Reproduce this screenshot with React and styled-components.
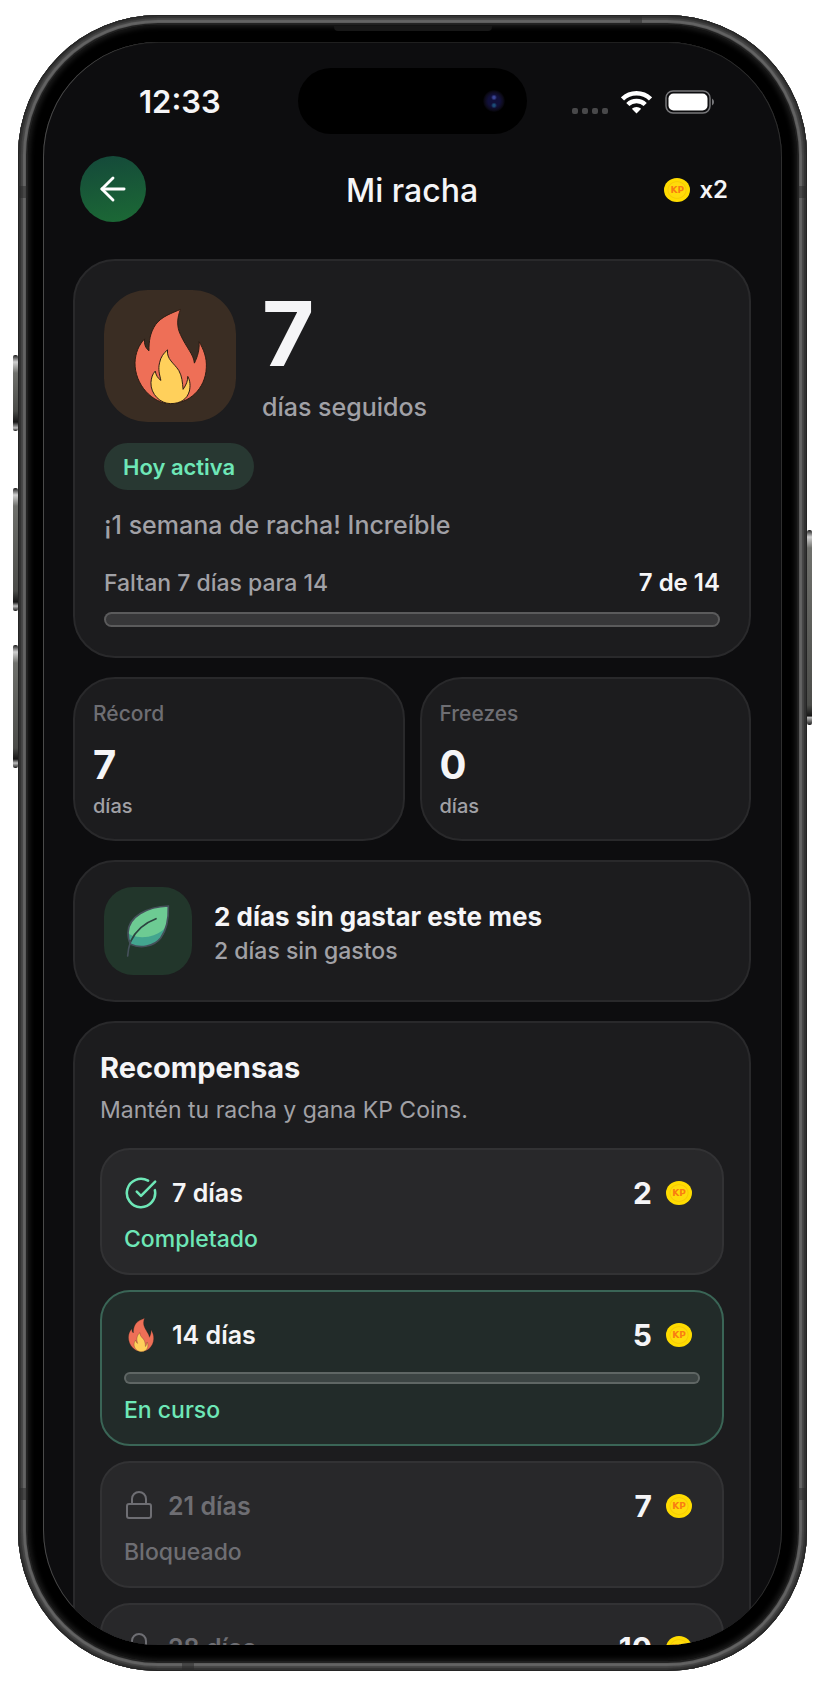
import React from 'react';
import styled, { createGlobalStyle } from 'styled-components';
import { ArrowLeft, CircleCheckBig } from 'lucide-react';

const GlobalStyle = createGlobalStyle`
  * {
    box-sizing: border-box;
  }

  body {
    margin: 0;
    background: #ffffff;
    font-family: Inter, 'Noto Sans', sans-serif;
    -webkit-font-smoothing: antialiased;
  }

  h1, h2, p, ul {
    margin: 0;
    padding: 0;
  }
`;

/* ---------- phone ---------- */

const Page = styled.div`
  height: 100vh;
  min-height: 900px;
  padding: 15px 17px 16px 18px;
`;

const Phone = styled.div`
  position: relative;
  height: 100%;
  padding: 10px;
  border-radius: 140px;
  background: #202020;
  box-shadow:
    inset 0 0 0 1px #242424,
    inset 0 0 1px 3px #323232,
    inset 0 0 1px 5px #454545,
    inset 0 0 1px 8px #646464,
    inset 0 0 0 9px #1c1c1c;
`;

const Bezel = styled.div`
  height: 100%;
  padding: 17px 15px 16px;
  border-radius: 130px;
  background: #000000;
  box-shadow: inset 0 0 5px 2px #1b1b1b;
`;

const Screen = styled.main`
  height: 100%;
  overflow: hidden;
  padding: 26px 31px 0 30px;
  border-radius: 115px;
  background: #0d0d0f;
  box-shadow: inset 1px 0 0 #4a4a4a, inset -1px 0 0 #2e2e2e, inset 0 1px 0 #1f1f1f;
  color: #f5f5f7;
`;

const Earpiece = styled.span`
  position: absolute;
  top: 11px;
  left: 50%;
  width: 158px;
  height: 5px;
  transform: translateX(-50%);
  border-radius: 0 0 4px 4px;
  background: #171717;
`;

const SideButton = styled.span`
  position: absolute;
  top: ${(props) => props.$top};
  ${(props) => props.$side}: -5px;
  width: 5px;
  height: ${(props) => props.$height};
  border-radius: 2px;
  background: linear-gradient(#1c1c1c, #d0d0d0 7px, #6f706c 18px, #4b4c49 calc(100% - 20px), #161616 calc(100% - 9px), #bdbdbd 96%, #1c1c1c);
`;

const Antenna = styled.span`
  position: absolute;
  ${(props) => props.$edge}: 0;
  ${(props) => props.$from}: ${(props) => props.$at};
  width: ${(props) => (props.$flat ? '12px' : '9px')};
  height: ${(props) => (props.$flat ? '9px' : '12px')};
  background: rgba(40, 40, 40, 0.5);
`;

/* ---------- status bar ---------- */

const StatusBar = styled.div`
  display: grid;
  grid-template-columns: 1fr auto 1fr;
  align-items: center;
`;

const Clock = styled.time`
  padding: 2px 0 0 66px;
  font-size: 31px;
  font-weight: 600;
  line-height: 40px;
`;

const Island = styled.div`
  display: flex;
  align-items: center;
  justify-content: flex-end;
  width: 229px;
  height: 66px;
  padding-right: 22px;
  border-radius: 33px;
  background: #000000;
`;

const Camera = styled.span`
  width: 22px;
  height: 22px;
  border-radius: 50%;
  background:
    radial-gradient(circle at 50% 34%, #3a4596 0 1px, transparent 3px),
    radial-gradient(circle at 50% 70%, #1b4d78 0 1px, transparent 3px),
    radial-gradient(circle, #11103a 0 6px, #0d0b1c 9px, #030305 11px);
`;

const Indicators = styled.div`
  display: flex;
  align-items: center;
  justify-content: flex-end;
  gap: 13px;
  padding: 2px 35px 0 0;
`;

const SignalDots = styled.span`
  display: flex;
  gap: 4px;
  padding-top: 17px;

  i {
    width: 6px;
    height: 6px;
    border-radius: 2px;
    background: #48484a;
  }
`;

/* ---------- header ---------- */

const Header = styled.header`
  display: grid;
  grid-template-columns: 1fr auto 1fr;
  align-items: center;
  margin: 22px 0 37px;
  padding: 0 7px;
`;

const BackButton = styled.button`
  display: flex;
  align-items: center;
  justify-content: center;
  width: 66px;
  height: 66px;
  padding: 0;
  border: 0;
  border-radius: 50%;
  background: linear-gradient(170deg, #14483a, #1c6a35);
  color: #ffffff;
`;

const Title = styled.h1`
  padding-top: 4px;
  font-size: 32px;
  font-weight: 500;
  line-height: 40px;
`;

const Multiplier = styled.div`
  display: flex;
  align-items: center;
  justify-content: flex-end;
  gap: 9px;
  padding: 2px 16px 0 0;
  font-size: 24px;
  font-weight: 600;
  line-height: 32px;
`;

const CoinFace = styled.span`
  display: inline-flex;
  align-items: center;
  justify-content: center;
  width: 26px;
  height: 24px;
  border-radius: 50%;
  background: radial-gradient(ellipse, #ffdb0a 0 8px, #f7c906 9px, #ffdc00 10px);
  color: #f97d12;
  font-family: 'DejaVu Sans', sans-serif;
  font-size: 9px;
  font-weight: 700;
  line-height: 10px;
`;

/* ---------- cards ---------- */

const Stack = styled.div`
  display: flex;
  flex-direction: column;
  gap: 19px;
`;

const Card = styled.section`
  border: 2px solid #29292b;
  border-radius: 42px;
  background: #1c1c1e;
`;

const StreakCard = styled(Card)`
  padding: 29px;
`;

const StreakTop = styled.div`
  display: flex;
  gap: 26px;
`;

const IconTile = styled.div`
  display: flex;
  flex: none;
  align-items: center;
  justify-content: center;
  width: ${(props) => props.$size};
  height: ${(props) => props.$size};
  border-radius: 33%;
  background: ${(props) => props.$color};
`;

const StreakCount = styled.p`
  margin-bottom: 13px;
  font-size: 90px;
  font-weight: 700;
  line-height: 88px;
`;

const Muted = styled.p`
  color: #a1a1a6;
  font-size: ${(props) => props.$size || '23px'};
  font-weight: ${(props) => props.$weight || 500};
  line-height: 32px;
`;

const Badge = styled.span`
  display: inline-block;
  margin: 20px 0 19px;
  padding: 2px 19px 0;
  border-radius: 24px;
  background: #283832;
  color: #6ee7b7;
  font-size: 22px;
  font-weight: 600;
  line-height: 45px;
  vertical-align: top;
`;

const GoalRow = styled.div`
  display: flex;
  justify-content: space-between;
  margin: 26px 0 13px;
`;

const GoalValue = styled.span`
  font-size: 24px;
  font-weight: 600;
  line-height: 32px;
`;

const Track = styled.div`
  height: ${(props) => props.$height};
  border: 2px solid rgba(255, 255, 255, 0.18);
  border-radius: 8px;
  background: rgba(255, 255, 255, 0.12);
`;

const StatGrid = styled.div`
  display: grid;
  grid-template-columns: 1fr 1fr;
  gap: 15px;
`;

const StatCard = styled(Card)`
  padding: 23px 18px 21px;
`;

const StatLabel = styled.h2`
  color: #6e6e73;
  font-size: 21px;
  font-weight: 500;
  line-height: 24px;
`;

const StatValue = styled.p`
  margin: 17px 0 7px;
  font-size: 40px;
  font-weight: 700;
  line-height: 44px;
`;

const StatUnit = styled.p`
  color: #a1a1a6;
  font-size: 20px;
  font-weight: 500;
  line-height: 24px;
`;

const NoSpendCard = styled(Card)`
  display: flex;
  align-items: center;
  gap: 22px;
  padding: 25px 29px;
`;

const NoSpendText = styled.div`
  padding-top: 4px;
`;

const CardTitle = styled.h2`
  font-size: ${(props) => props.$size};
  font-weight: 700;
  line-height: 36px;
`;

const RewardsCard = styled(Card)`
  padding: 27px 25px 26px;
`;

const RewardsIntro = styled.div`
  display: grid;
  gap: 8px;
  margin-bottom: 22px;
`;

const RewardList = styled.ul`
  display: grid;
  gap: 15px;
  list-style: none;
`;

const RewardItem = styled.li`
  padding: 23px 22px 19px;
  border: 2px solid ${(props) => (props.$active ? '#3a6556' : '#323234')};
  border-radius: 30px;
  background: ${(props) => (props.$active ? '#222b29' : '#28282a')};
`;

const RewardRow = styled.div`
  display: flex;
  align-items: center;
  gap: 14px;
  height: 40px;
`;

const RewardName = styled.span`
  flex: 1;
  color: ${(props) => (props.$locked ? '#6e6e73' : '#f5f5f7')};
  font-size: 25px;
  font-weight: 600;
  line-height: 32px;
`;

const RewardAmount = styled.span`
  display: flex;
  align-items: center;
  gap: 14px;
  padding-right: 8px;
  font-size: 30px;
  font-weight: 700;
  line-height: 40px;
`;

const RewardTrack = styled(Track)`
  margin-top: 17px;
`;

const RewardStatus = styled.p`
  margin-top: 11px;
  color: ${(props) => (props.$locked ? '#6e6e73' : '#6ee7b7')};
  font-size: 23px;
  font-weight: 500;
  line-height: 30px;
`;

/* ---------- icons ---------- */

function FlameIcon({ width, height, stroke = 3 }) {
  return (
    <svg width={width} height={height} viewBox="220 171 220 290" aria-hidden="true">
      <g stroke="#2a1d14" strokeWidth={stroke} strokeLinejoin="round">
        <path
          fill="#ee6f57"
          d="M360 174C350 200 348 225 360 250C378 290 400 310 402 336C412 315 418 295 416 271C430 295 440 320 438 350C435 415 385 458 330 458C275 458 222 400 223 335C224 305 235 280 252 263C250 280 255 290 265 299C265 270 268 245 285 220C303 195 335 185 360 174Z"
        />
        <path
          fill="#ffd05b"
          d="M321 296C318 325 340 335 355 358C365 375 366 395 368 415C378 400 382 390 382 376C390 390 390 405 387 420C380 445 360 458 330 458C300 458 270 430 271 395C272 380 276 368 284 360C286 372 292 382 301 388C297 370 292 355 297 335C300 318 310 305 321 296Z"
        />
      </g>
    </svg>
  );
}

function LeafIcon() {
  return (
    <svg width="44" height="54" viewBox="198 164 132 162" fill="none" aria-hidden="true">
      <path fill="#6dcb93" d="M325 170C262 172 205 202 204 250C204 264 207 276 212 285C240 298 282 292 302 266C323 238 326 205 325 170Z" />
      <path fill="#43a58f" d="M204 246C206 262 240 266 265 262C288 258 304 247 316 236C312 252 308 260 302 266C282 292 240 298 212 285C206 274 203 262 204 246Z" />
      <g stroke="#45505a" strokeWidth="5" strokeLinecap="round">
        <path d="M325 170C262 172 205 202 204 250C204 264 207 276 212 285C240 298 282 292 302 266C323 238 326 205 325 170Z" />
        <path stroke="#2c4440" d="M288 208C250 222 224 250 212 276" />
        <path d="M212 276C207 290 204 304 203 320" />
      </g>
    </svg>
  );
}

function LockIcon() {
  return (
    <svg width="30" height="34" viewBox="0 0 30 34" fill="none" stroke="#6e6e73" strokeWidth="2" aria-hidden="true">
      <rect x="3" y="15" width="24" height="14" rx="2" />
      <path d="M8 15V10a7 7 0 0 1 14 0v5" />
    </svg>
  );
}

function WifiIcon() {
  return (
    <svg width="31" height="24" viewBox="0 0 31 24" fill="none" aria-hidden="true">
      <path stroke="#ffffff" strokeWidth="4.500" d="M1.500 9A20 20 0 0 1 29.500 9" />
      <path stroke="#ffffff" strokeWidth="4.500" d="M6.800 14.500A12.500 12.500 0 0 1 24.200 14.500" />
      <path fill="#ffffff" d="M15.500 23.500L10.800 18.700A7 7 0 0 1 20.200 18.700Z" />
    </svg>
  );
}

function BatteryIcon() {
  return (
    <svg width="51" height="24" viewBox="0 0 51 24" fill="none" aria-hidden="true">
      <rect x="1" y="1" width="44" height="22" rx="7" stroke="#77777a" strokeWidth="1.500" />
      <rect x="3.500" y="3.500" width="39" height="17" rx="5" fill="#ffffff" />
      <path d="M47 8.500a4 4 0 0 1 0 7z" fill="#77777a" />
    </svg>
  );
}

function Coin() {
  return <CoinFace>KP</CoinFace>;
}

/* ---------- rewards ---------- */

const rewards = [
  { days: 7, coins: 2, status: 'done' },
  { days: 14, coins: 5, status: 'active' },
  { days: 21, coins: 7, status: 'locked' },
  { days: 28, coins: 10, status: 'locked' },
];

const statusText = {
  done: 'Completado',
  active: 'En curso',
  locked: 'Bloqueado',
};

function RewardIcon({ status }) {
  if (status === 'done') {
    return <CircleCheckBig size={34} color="#6ee7b7" strokeWidth={1.8} />;
  }
  if (status === 'active') {
    return <FlameIcon width={34} height={34} stroke={2} />;
  }
  return <LockIcon />;
}

function Reward({ days, coins, status }) {
  const locked = status === 'locked';

  return (
    <RewardItem $active={status === 'active'}>
      <RewardRow>
        <RewardIcon status={status} />
        <RewardName $locked={locked}>{days} días</RewardName>
        <RewardAmount>
          {coins}
          <Coin />
        </RewardAmount>
      </RewardRow>
      {status === 'active' && (
        <RewardTrack $height="12px" role="progressbar" aria-label={`Progreso hacia ${days} días`} />
      )}
      <RewardStatus $locked={locked}>{statusText[status]}</RewardStatus>
    </RewardItem>
  );
}

function App() {
  return (
    <Page>
      <GlobalStyle />
      <Phone>
        <SideButton $side="left" $top="340px" $height="76px" />
        <SideButton $side="left" $top="473px" $height="123px" />
        <SideButton $side="left" $top="630px" $height="123px" />
        <SideButton $side="right" $top="515px" $height="195px" />
        <Antenna $edge="left" $from="top" $at="171px" />
        <Antenna $edge="right" $from="top" $at="171px" />
        <Antenna $edge="left" $from="bottom" $at="171px" />
        <Antenna $edge="right" $from="bottom" $at="171px" />
        <Antenna $flat $edge="top" $from="right" $at="165px" />
        <Antenna $flat $edge="bottom" $from="left" $at="164px" />
        <Earpiece />
        <Bezel>
          <Screen>
            <StatusBar>
              <Clock>12:33</Clock>
              <Island>
                <Camera />
              </Island>
              <Indicators>
                <SignalDots>
                  <i />
                  <i />
                  <i />
                  <i />
                </SignalDots>
                <WifiIcon />
                <BatteryIcon />
              </Indicators>
            </StatusBar>

            <Header>
              <BackButton type="button" aria-label="Volver">
                <ArrowLeft size={38} strokeWidth={1.8} />
              </BackButton>
              <Title>Mi racha</Title>
              <Multiplier>
                <Coin />
                x2
              </Multiplier>
            </Header>

            <Stack>
              <StreakCard>
                <StreakTop>
                  <IconTile $size="132px" $color="#3a2d23">
                    <FlameIcon width={73} height={97} />
                  </IconTile>
                  <div>
                    <StreakCount>7</StreakCount>
                    <Muted $size="25px">días seguidos</Muted>
                  </div>
                </StreakTop>
                <Badge>Hoy activa</Badge>
                <Muted $size="25px">¡1 semana de racha! Increíble</Muted>
                <GoalRow>
                  <Muted>Faltan 7 días para 14</Muted>
                  <GoalValue>7 de 14</GoalValue>
                </GoalRow>
                <Track $height="15px" role="progressbar" aria-label="Progreso de la racha" />
              </StreakCard>

              <StatGrid>
                <StatCard>
                  <StatLabel>Récord</StatLabel>
                  <StatValue>7</StatValue>
                  <StatUnit>días</StatUnit>
                </StatCard>
                <StatCard>
                  <StatLabel>Freezes</StatLabel>
                  <StatValue>0</StatValue>
                  <StatUnit>días</StatUnit>
                </StatCard>
              </StatGrid>

              <NoSpendCard>
                <IconTile $size="88px" $color="#22362b">
                  <LeafIcon />
                </IconTile>
                <NoSpendText>
                  <CardTitle $size="26px">2 días sin gastar este mes</CardTitle>
                  <Muted>2 días sin gastos</Muted>
                </NoSpendText>
              </NoSpendCard>

              <RewardsCard>
                <RewardsIntro>
                  <CardTitle $size="29px">Recompensas</CardTitle>
                  <Muted $weight={400}>Mantén tu racha y gana KP Coins.</Muted>
                </RewardsIntro>
                <RewardList>
                  {rewards.map((reward) => (
                    <Reward key={reward.days} {...reward} />
                  ))}
                </RewardList>
              </RewardsCard>
            </Stack>
          </Screen>
        </Bezel>
      </Phone>
    </Page>
  );
}

export default App;
